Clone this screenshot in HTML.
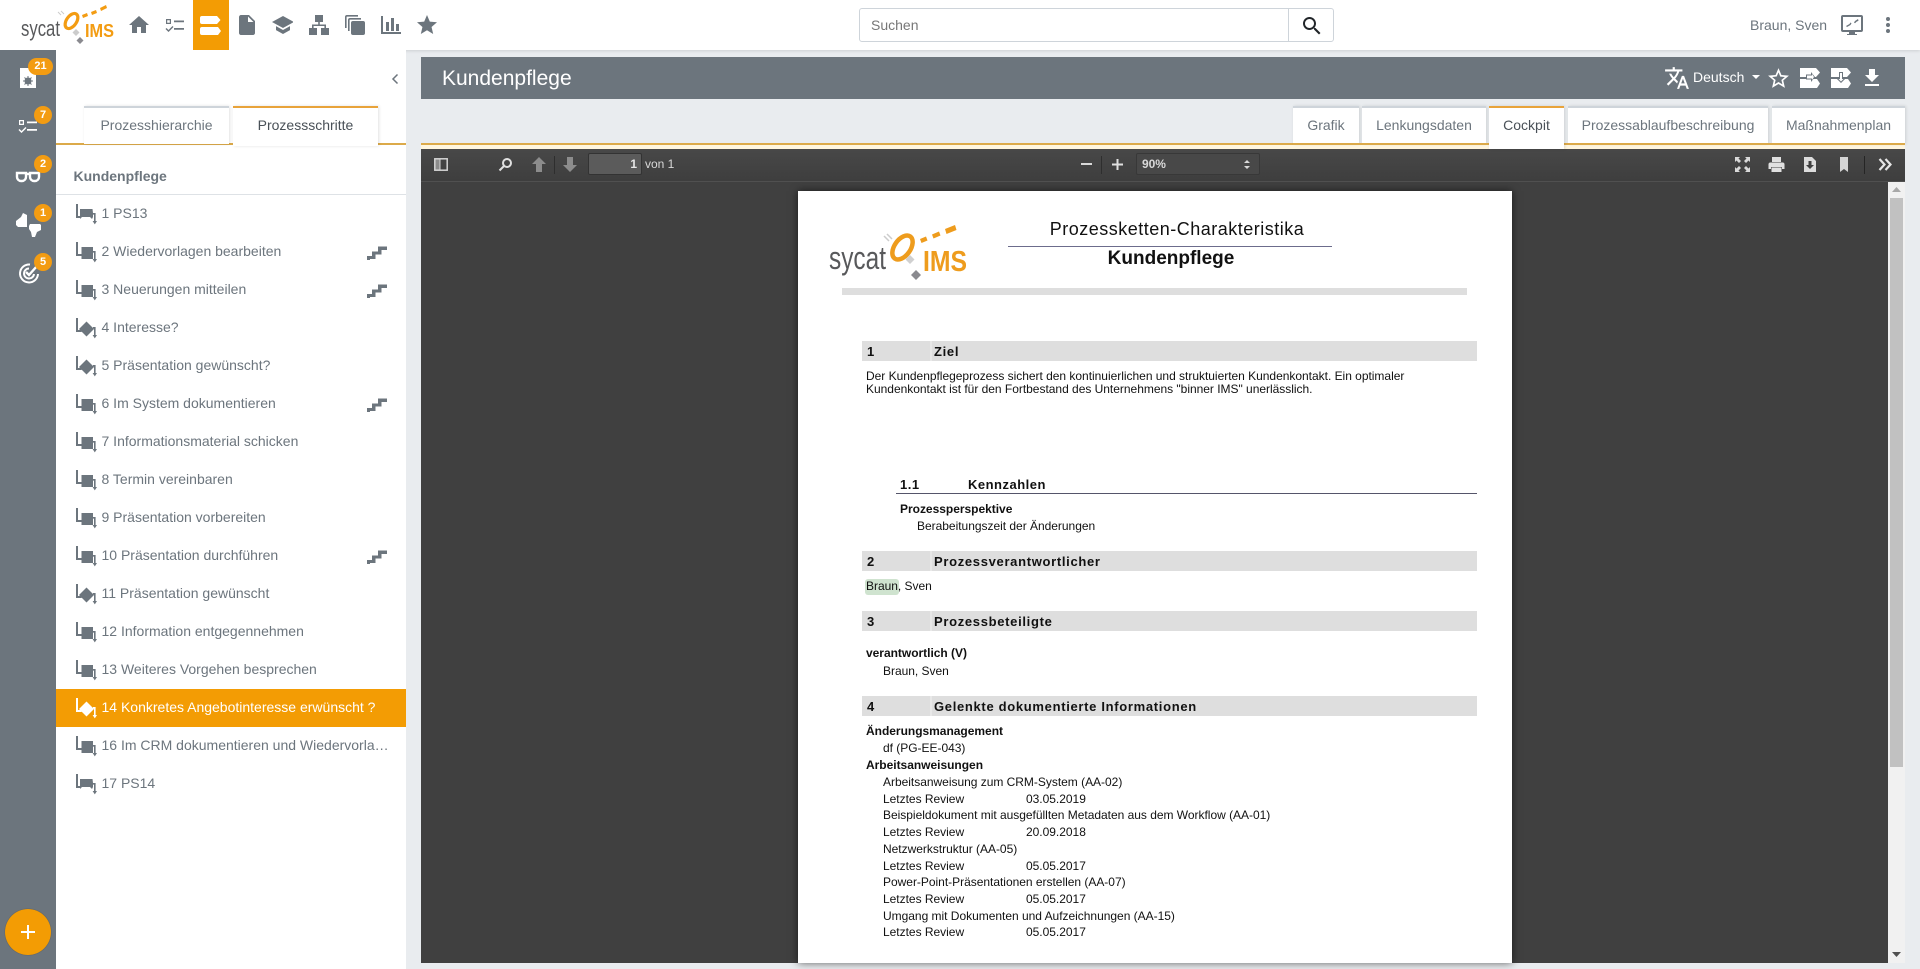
<!DOCTYPE html>
<html lang="de">
<head>
<meta charset="utf-8">
<title>Kundenpflege</title>
<style>
html,body{margin:0;padding:0;width:1920px;height:969px;overflow:hidden;background:#e9ecef;font-family:"Liberation Sans",Arial,sans-serif;color:#6c757d}
*{box-sizing:border-box}
.a{position:absolute}
svg{position:absolute;overflow:visible}
#hdr{left:0;top:0;width:1920px;height:50px;background:#fff;box-shadow:0 1px 3px rgba(0,0,0,.12)}
#rail{left:0;top:50px;width:56px;height:919px;background:#6c757d}
#panel{left:56px;top:50px;width:350px;height:919px;background:#fff}
.bd{position:absolute;background:#f39c12;color:#fff;font-weight:bold;font-size:11px;line-height:17px;height:17px;min-width:18px;border-radius:9px;text-align:center}
.tab{position:absolute;top:106px;height:38px;background:#fff;border-top:2px solid #ced4da;font-size:14px;line-height:35px;text-align:center;color:#6c757d;box-shadow:1px 0 3px rgba(0,0,0,.12)}
.tab.on{border-top:2px solid #e8a33a;height:40px;color:#495057;z-index:3}
.line{position:absolute;height:2px;background:#dcaa4a}
.row{position:absolute;left:56px;width:350px;height:38px;font-size:14px;line-height:38px;color:#6c757d}
.row span{position:absolute;left:45.500px;white-space:nowrap}
.row svg{left:17px;top:9px}
.row.on{background:#f39c04;color:#fff}
.row svg.st{left:311px;top:13px}
.t{position:absolute;white-space:nowrap;line-height:16px;font-size:12px;color:#111;letter-spacing:-.02px}
.b{font-weight:bold}
.h{position:absolute;left:862px;width:615px;height:20px;background:#dedede;font-weight:bold;font-size:13px;letter-spacing:.68px;line-height:21px;color:#111;white-space:nowrap}
.h i{position:absolute;left:68px;top:0;width:2px;height:20px;background:#e8e8e8}
.h span{position:absolute;left:5px}
.h b{position:absolute;left:72px}
.tb{color:#d9d9d9}
</style>
</head>
<body>
<svg width="0" height="0" style="position:absolute">
<defs>
<symbol id="task" viewBox="0 0 24 24"><path d="M3 1h2v12h4v2H3z"/><rect x="8.500" y="6" width="11.500" height="12"/><path d="M20 10h2.600v8h1.400l-2.200 3.400-2.200-3.400h1.400v-6.400H20z"/></symbol>
<symbol id="ps" viewBox="0 0 24 24"><path d="M3 1h2v12h2v2H3z"/><path d="M7 6h12.500l.5 4v4l-1 2-2-2H9l-2 2z"/><path d="M20 10h2.600v8h1.400l-2.200 3.400-2.200-3.400h1.400v-6.400H20z"/></symbol>
<symbol id="gate" viewBox="0 0 24 24"><path d="M3 1h2v12h3.500v2H3z"/><path d="M13.500 4.500l7.500 7.500-7.500 7.500L6 12z"/><path d="M20 10h2.600v8h1.400l-2.200 3.400-2.200-3.400h1.400v-6.400H20z"/></symbol>
<symbol id="stair" viewBox="0 0 20 15"><path d="M0 15v-4h5V6.500h6V1.500h9v3.500h-5.500v4.500H8.500V14H3v1z"/></symbol>
</defs>
</svg>

<!-- Header -->
<div class="a" id="hdr"></div>
<svg style="left:0;top:0" width="125" height="50" viewBox="0 0 125 50">
<text x="21" y="36" font-family="Liberation Sans" font-size="22" fill="#58595b" textLength="39" lengthAdjust="spacingAndGlyphs">sycat</text>
<ellipse cx="71.500" cy="21" rx="5" ry="8.500" transform="rotate(35 71.500 21)" fill="none" stroke="#f39c12" stroke-width="3.200"/>
<path d="M82 15l5-2 1 3-5 2zM91 12l5-2 1 3-5 2zM100 8l6-3 1 3-6 3z" fill="#f39c12"/>
<path d="M58 12l3 3M61 11l3 3" stroke="#ccc" stroke-width="1"/>
<path d="M76 29l3.500 3.500L76 36l-3.500-3.500z" fill="#ccc"/>
<path d="M80 37l3.500 3.500L80 44l-3.500-3.500z" fill="#8a8a8f"/>
<text x="85" y="37" font-family="Liberation Sans" font-weight="bold" font-size="18" fill="#f39c12" textLength="29" lengthAdjust="spacingAndGlyphs">IMS</text>
</svg>
<svg style="left:127px;top:13px" width="24" height="24" viewBox="0 0 24 24" fill="#6c757d"><path d="M10 20v-6h4v6h5v-8h3L12 3 2 12h3v8z"/></svg>
<svg style="left:164px;top:18px" width="22" height="16" viewBox="0 0 22 16" fill="#6c757d"><path d="M2 1h5v5H2zm1.200 1.200v2.600h2.600V2.200zM10 2.500h10v1.800H10zM10 10h10v1.800H10z"/><path d="M1.500 11l1-1 2 2 4-4 1 1-5 5z"/></svg>
<div class="a" style="left:193px;top:0;width:36px;height:50px;background:#f39c04"></div>
<svg style="left:199px;top:15px" width="23" height="21" viewBox="0 0 23 21" fill="#fff"><path d="M3 1h15l3.500 4-3.500 4H3a2 2 0 0 1-2-2V3a2 2 0 0 1 2-2zM3 12h16l3 4-3 4H3a2 2 0 0 1-2-2v-4a2 2 0 0 1 2-2z"/></svg>
<svg style="left:235px;top:13px" width="24" height="24" viewBox="0 0 24 24" fill="#6c757d"><path d="M6 2c-1.100 0-1.990.9-1.990 2L4 20c0 1.100.89 2 1.990 2H18c1.100 0 2-.9 2-2V8l-6-6H6zm7 7V3.500L18.500 9H13z"/></svg>
<svg style="left:271px;top:13px" width="24" height="24" viewBox="0 0 24 24" fill="#6c757d"><path d="M5 13.180v4L12 21l7-3.820v-4L12 17l-7-3.820zM12 3L1 9l11 6 10-5.500v-1z"/></svg>
<svg style="left:308px;top:14px" width="22" height="22" viewBox="0 0 22 22" fill="#6c757d"><path d="M7 1h8v7H7zM1 14h8v7H1zM13 14h8v7h-8z"/><path d="M10.200 8h1.600v2.500H18V14h-1.600v-2H5.600v2H4v-3.500h6.200z"/></svg>
<svg style="left:344px;top:14px" width="22" height="22" viewBox="0 0 22 22" fill="#6c757d"><rect x="7" y="7" width="14" height="14" rx="2"/><path d="M1 3a2 2 0 0 1 2-2h11v1.600H3a.4.4 0 0 0-.4.4v11H1z"/><path d="M4 6a2 2 0 0 1 2-2h11v1.600H6a.4.4 0 0 0-.4.4v11H4z"/></svg>
<svg style="left:380px;top:15px" width="22" height="20" viewBox="0 0 22 20" fill="#6c757d"><path d="M1 1h2v16h18v2H1zM6 7h3v9H6zM11 3h3v13h-3zM16 9h3v7h-3z"/></svg>
<svg style="left:415px;top:13px" width="24" height="24" viewBox="0 0 24 24" fill="#6c757d"><path d="M12 17.270L18.180 21l-1.640-7.030L22 9.240l-7.190-.61L12 2 9.190 8.630 2 9.240l5.460 4.730L5.820 21z"/></svg>

<div class="a" style="left:859px;top:8px;width:475px;height:34px;border:1px solid #ced4da;border-radius:3px;background:#fff"></div>
<div class="a" style="left:1288px;top:8px;width:1px;height:34px;background:#ced4da"></div>
<div class="t" style="left:871px;top:17px;font-size:14px;color:#777;letter-spacing:0">Suchen</div>
<svg style="left:1300px;top:14px" width="24" height="24" viewBox="0 0 24 24" fill="#212529"><path d="M15.500 14h-.79l-.28-.27C15.410 12.590 16 11.110 16 9.500 16 5.910 13.090 3 9.500 3S3 5.910 3 9.500 5.910 16 9.500 16c1.610 0 3.090-.59 4.230-1.570l.27.28v.79l5 4.990L20.490 19l-4.990-5zm-6 0C7.010 14 5 11.990 5 9.500S7.010 5 9.500 5 14 7.010 14 9.500 11.990 14 9.500 14z"/></svg>
<div class="t" style="left:1750px;top:17px;font-size:14px;color:#6c757d;letter-spacing:0">Braun, Sven</div>
<svg style="left:1840px;top:14px" width="24" height="22" viewBox="0 0 24 22" fill="#6c757d"><path d="M3 1h18a2 2 0 0 1 2 2v13a2 2 0 0 1-2 2h-6v2h2v1H7v-1h2v-2H3a2 2 0 0 1-2-2V3a2 2 0 0 1 2-2zm0 2v13h18V3z"/><path d="M6 12l3.500-2 1-1.500 1 .8-1 1.700L7 13zM18 5l-3 2-1 1.500 1 .8 1.500-1.500 2-1z"/></svg>
<svg style="left:1882px;top:16px" width="12" height="18" viewBox="0 0 12 18" fill="#6c757d"><circle cx="6" cy="3" r="2"/><circle cx="6" cy="9" r="2"/><circle cx="6" cy="15" r="2"/></svg>

<!-- Rail -->
<div class="a" id="rail"></div>
<svg style="left:19px;top:67px" width="18" height="22" viewBox="0 0 18 22" fill="#fff"><path d="M1 1h10l6 6v14H1z"/><circle cx="9" cy="14" r="3.500" fill="#6c757d"/><path d="M9 9v10M4 14h10M5.500 10.500l7 7M12.500 10.500l-7 7" stroke="#6c757d" stroke-width="1"/></svg>
<div class="bd" style="left:28px;top:58px;width:25px">21</div>
<svg style="left:17px;top:119px" width="22" height="16" viewBox="0 0 22 16" fill="#fff"><path d="M2 1h5v5H2zm1.200 1.200v2.600h2.600V2.200zM10 2.500h10v1.800H10zM10 10h10v1.800H10z"/><path d="M1.500 11l1-1 2 2 4-4 1 1-5 5z"/></svg>
<div class="bd" style="left:34px;top:106px;height:18px;line-height:18px">7</div>
<svg style="left:15px;top:171px" width="26" height="12" viewBox="0 0 26 12" fill="none" stroke="#fff" stroke-width="2.400"><path d="M2 2h9v4a4 4 0 0 1-4 4H6a4 4 0 0 1-4-4zM15 2h9v4a4 4 0 0 1-4 4h-1a4 4 0 0 1-4-4z"/><path d="M11 3h4"/></svg>
<div class="bd" style="left:34px;top:155px;height:18px;line-height:18px">2</div>
<svg style="left:15px;top:212px" width="27" height="26" viewBox="0 0 27 26" fill="#fff"><path d="M1 9l5-4 2-4 4 2v12H3l-2-2zM15 12h10l1 1v5l-4 2-2 5h-3l-1-5-2-3v-3z"/></svg>
<div class="bd" style="left:34px;top:204px;height:18px;line-height:18px">1</div>
<svg style="left:17px;top:262px" width="24" height="22" viewBox="0 0 24 22" fill="none" stroke="#fff" stroke-width="2"><path d="M13 2.500A9 9 0 1 0 21 12"/><path d="M12 6.500A5 5 0 1 0 17 12"/><path d="M9 10l3 3 8-9" stroke-width="2.400"/></svg>
<div class="bd" style="left:34px;top:253px;height:18px;line-height:18px">5</div>
<div class="a" style="left:5px;top:909px;width:46px;height:46px;border-radius:50%;background:#f39c04;box-shadow:0 0 1px rgba(0,0,0,.4)"></div>
<svg style="left:21px;top:925px" width="14" height="14" viewBox="0 0 14 14" fill="#fff"><path d="M6 0h2v6h6v2H8v6H6V8H0V6h6z"/></svg>

<!-- Panel -->
<div class="a" id="panel"></div>
<svg style="left:391px;top:73px" width="8" height="12" viewBox="0 0 8 12" fill="none" stroke="#6c757d" stroke-width="1.500"><path d="M6.500 1.500L2 6l4.500 4.500"/></svg>
<div class="line" style="left:56px;top:143px;width:350px"></div>
<div class="tab" style="left:84px;width:145px">Prozesshierarchie</div>
<div class="tab on" style="left:233px;width:145px">Prozessschritte</div>
<div class="t b" style="left:73.500px;top:168px;font-size:14px;color:#6c757d;letter-spacing:0">Kundenpflege</div>
<div class="a" style="left:56px;top:194px;width:350px;height:1px;background:#dee2e6"></div>

<div class="row" style="top:194px"><svg width="24" height="24" fill="#6c757d"><use href="#ps"/></svg><span>1 PS13</span></div>
<div class="row" style="top:232px"><svg width="24" height="24" fill="#6c757d"><use href="#task"/></svg><span>2 Wiedervorlagen bearbeiten</span><svg class="st" width="20" height="15" fill="#6c757d"><use href="#stair"/></svg></div>
<div class="row" style="top:270px"><svg width="24" height="24" fill="#6c757d"><use href="#task"/></svg><span>3 Neuerungen mitteilen</span><svg class="st" width="20" height="15" fill="#6c757d"><use href="#stair"/></svg></div>
<div class="row" style="top:308px"><svg width="24" height="24" fill="#6c757d"><use href="#gate"/></svg><span>4 Interesse?</span></div>
<div class="row" style="top:346px"><svg width="24" height="24" fill="#6c757d"><use href="#gate"/></svg><span>5 Präsentation gewünscht?</span></div>
<div class="row" style="top:384px"><svg width="24" height="24" fill="#6c757d"><use href="#task"/></svg><span>6 Im System dokumentieren</span><svg class="st" width="20" height="15" fill="#6c757d"><use href="#stair"/></svg></div>
<div class="row" style="top:422px"><svg width="24" height="24" fill="#6c757d"><use href="#task"/></svg><span>7 Informationsmaterial schicken</span></div>
<div class="row" style="top:460px"><svg width="24" height="24" fill="#6c757d"><use href="#task"/></svg><span>8 Termin vereinbaren</span></div>
<div class="row" style="top:498px"><svg width="24" height="24" fill="#6c757d"><use href="#task"/></svg><span>9 Präsentation vorbereiten</span></div>
<div class="row" style="top:536px"><svg width="24" height="24" fill="#6c757d"><use href="#task"/></svg><span>10 Präsentation durchführen</span><svg class="st" width="20" height="15" fill="#6c757d"><use href="#stair"/></svg></div>
<div class="row" style="top:574px"><svg width="24" height="24" fill="#6c757d"><use href="#gate"/></svg><span>11 Präsentation gewünscht</span></div>
<div class="row" style="top:612px"><svg width="24" height="24" fill="#6c757d"><use href="#task"/></svg><span>12 Information entgegennehmen</span></div>
<div class="row" style="top:650px"><svg width="24" height="24" fill="#6c757d"><use href="#task"/></svg><span>13 Weiteres Vorgehen besprechen</span></div>
<div class="row on" style="top:689px"><svg width="24" height="24" fill="#fff" style="top:8px"><use href="#gate"/></svg><span style="top:-1px">14 Konkretes Angebotinteresse erwünscht ?</span></div>
<div class="row" style="top:726px"><svg width="24" height="24" fill="#6c757d"><use href="#task"/></svg><span style="width:288px;overflow:hidden;text-overflow:ellipsis">16 Im CRM dokumentieren und Wiedervorlage</span></div>
<div class="row" style="top:764px"><svg width="24" height="24" fill="#6c757d"><use href="#ps"/></svg><span>17 PS14</span></div>

<!-- Title bar -->
<div class="a" style="left:421px;top:57px;width:1484px;height:42px;background:#6c757d"></div>
<div class="t" style="left:442px;top:67px;font-size:21px;line-height:24px;color:#fff;letter-spacing:0">Kundenpflege</div>
<svg style="left:1664px;top:65px" width="26" height="26" viewBox="0 0 24 24" fill="#fff"><path d="M12.870 15.070l-2.540-2.510.03-.03c1.740-1.940 2.980-4.170 3.710-6.530H17V4h-7V2H8v2H1v1.990h11.170C11.500 7.920 10.440 9.750 9 11.350 8.070 10.320 7.300 9.190 6.690 8h-2c.73 1.630 1.730 3.170 2.980 4.560l-5.090 5.020L4 19l5-5 3.110 3.110.76-2.040zM18.500 10h-2L12 22h2l1.120-3h4.750L21 22h2l-4.500-12zm-2.620 7l1.620-4.330L19.120 17h-3.240z"/></svg>
<div class="t" style="left:1693px;top:69px;font-size:14px;color:#fff;letter-spacing:0">Deutsch</div>
<svg style="left:1752px;top:75px" width="8" height="4" viewBox="0 0 8 4" fill="#fff"><path d="M0 0h8L4 4z"/></svg>
<svg style="left:1766px;top:66px" width="25" height="25" viewBox="0 0 24 24" fill="#fff"><path d="M22 9.240l-7.190-.62L12 2 9.190 8.630 2 9.240l5.460 4.730L5.820 21 12 17.270 18.180 21l-1.630-7.030L22 9.240zM12 15.400l-3.760 2.270 1-4.280-3.320-2.880 4.380-.38L12 6.100l1.710 4.040 4.380.38-3.320 2.880 1 4.280L12 15.400z"/></svg>
<svg style="left:1800px;top:68px" width="21" height="20" viewBox="0 0 21 20" fill="#fff"><path d="M0 0h16l4 4.500-4 4.500H0zM0 11h17l3 4.500-3 4.500H0z"/><path d="M6 6.500h5V4l4 5-4 5v-2.500H6z" fill="#6c757d"/><path d="M7 7.500h5V6l2 3-2 3v-1.500H7z" fill="#fff"/></svg>
<svg style="left:1831px;top:68px" width="21" height="20" viewBox="0 0 21 20" fill="#fff"><path d="M0 0h16l4 4.500-4 4.500H0zM0 11h17l3 4.500-3 4.500H0z"/><path d="M8 4h4v6h3l-5 5-5-5h3z" fill="#6c757d"/><path d="M9 5h2v6h1.500L10 13.500 7.500 11H9z" fill="#fff"/></svg>
<svg style="left:1860px;top:66px" width="24" height="24" viewBox="0 0 24 24" fill="#fff"><path d="M19 9h-4V3H9v6H5l7 7 7-7zM5 18v2h14v-2H5z"/></svg>

<!-- Right tabs -->
<div class="a" style="left:421px;top:143px;width:1484px;height:6px;background:#fff6df"></div>
<div class="line" style="left:421px;top:143px;width:1484px"></div>
<div class="tab" style="left:1293px;width:66px">Grafik</div>
<div class="tab" style="left:1362px;width:124px">Lenkungsdaten</div>
<div class="tab on" style="left:1489px;width:75px;height:43px">Cockpit</div>
<div class="tab" style="left:1568px;width:200px">Prozessablaufbeschreibung</div>
<div class="tab" style="left:1772px;width:133px">Maßnahmenplan</div>
<div class="line" style="left:1293px;top:143px;width:196px"></div>
<div class="line" style="left:1564px;top:143px;width:341px"></div>

<!-- PDF viewer -->
<div class="a" style="left:421px;top:149px;width:1467px;height:814px;background:#404040"></div>
<div class="a" style="left:421px;top:149px;width:1484px;height:33px;background:linear-gradient(#484848,#3e3e3e);border-bottom:1px solid #505050;z-index:2"></div>
<div class="a" style="z-index:4;left:0;top:0">
<svg style="left:434px;top:158px" width="14" height="13" viewBox="0 0 14 13" fill="none" stroke="#d4d4d4" stroke-width="1.500"><rect x=".8" y=".8" width="12.400" height="11.400"/><path d="M6 1v11" stroke-width="1"/><rect x="1.500" y="1.500" width="4" height="10" fill="#d4d4d4" stroke="none" opacity=".5"/></svg>
<svg style="left:498px;top:157px" width="15" height="15" viewBox="0 0 15 15" fill="none" stroke="#e0e0e0" stroke-width="2"><circle cx="9" cy="6" r="4"/><path d="M6 9l-4.500 4.500"/></svg>
<svg style="left:531px;top:157px" width="16" height="15" viewBox="0 0 16 15" fill="#8c8c8c"><path d="M8 0l7 7h-4v8H5V7H1z"/></svg>
<div class="a" style="left:554px;top:156px;width:1px;height:18px;background:#2e2e2e"></div>
<svg style="left:562px;top:157px" width="16" height="15" viewBox="0 0 16 15" fill="#8c8c8c"><path d="M8 15L1 8h4V0h6v8h4z"/></svg>
<div class="a" style="left:588px;top:153px;width:54px;height:22px;background:#5b5b5b;border:1px solid #333;border-radius:2px"></div>
<div class="t b" style="left:588px;top:156px;width:49px;text-align:right;font-size:12px;color:#e6e6e6;font-weight:bold">1</div>
<div class="t tb" style="left:645px;top:156px;font-size:12px">von 1</div>

<svg style="left:1081px;top:163px" width="11" height="2" fill="#d9d9d9"><rect width="11" height="2"/></svg>
<div class="a" style="left:1101px;top:156px;width:1px;height:18px;background:#2e2e2e"></div>
<svg style="left:1112px;top:159px" width="11" height="11" fill="#e0e0e0"><path d="M4.500 0h2v4.500H11v2H6.500V11h-2V6.500H0v-2h4.500z"/></svg>
<div class="a" style="left:1136px;top:153px;width:124px;height:22px;background:#484848;border:1px solid #383838;border-radius:2px"></div>
<div class="t tb b" style="left:1142px;top:156px;font-size:12px">90%</div>
<svg style="left:1244px;top:160px" width="6" height="9" fill="#d9d9d9"><path d="M3 0l3 3H0zM3 9L0 6h6z"/></svg>

<svg style="left:1735px;top:157px" width="15" height="15" viewBox="0 0 15 15" fill="#d9d9d9"><path d="M0 0h5l-1.500 1.500L6 4 4 6 1.500 3.500 0 5zM15 0v5l-1.500-1.500L11 6 9 4l2.500-2.500L10 0zM0 15v-5l1.500 1.500L4 9l2 2-2.500 2.500L5 15zM15 15h-5l1.500-1.500L9 11l2-2 2.500 2.500L15 10z"/></svg>
<svg style="left:1768px;top:157px" width="17" height="15" viewBox="0 0 17 15" fill="#e0e0e0"><path d="M4 0h9v5H4zM2 5.500h13a2 2 0 0 1 1.500 2V12H14v-2H3v2H.5V7.500a2 2 0 0 1 1.500-2zM3.500 10.500h10V15h-10z"/></svg>
<svg style="left:1804px;top:157px" width="12" height="15" viewBox="0 0 12 15" fill="#dcdcdc"><path d="M0 0h8l4 4v11H0z"/><path d="M4.500 4h3v4H10l-4 4-4-4h2.500z" fill="#3f3f3f"/></svg>
<svg style="left:1840px;top:157px" width="8" height="15" viewBox="0 0 8 15" fill="#d4d4d4"><path d="M0 0h8v15l-4-3-4 3z"/></svg>
<div class="a" style="left:1864px;top:156px;width:1px;height:18px;background:#252525"></div>
<svg style="left:1878px;top:158px" width="14" height="13" viewBox="0 0 14 13" fill="none" stroke="#e6e6e6" stroke-width="2.200"><path d="M1.500 1l5 5.500-5 5.500M7.500 1l5 5.500-5 5.500"/></svg>
</div>

<!-- Scrollbar -->
<div class="a" style="left:1888px;top:182px;width:17px;height:781px;background:#f1f1f1"></div>
<svg style="left:1892px;top:187px" width="9" height="5" fill="#a8a8a8"><path d="M4.500 0L9 5H0z"/></svg>
<div class="a" style="left:1890px;top:198px;width:13px;height:569px;background:#c1c1c1"></div>
<svg style="left:1892px;top:952px" width="9" height="5" fill="#505050"><path d="M0 0h9L4.500 5z"/></svg>

<!-- PDF page -->
<div class="a" style="left:798px;top:191px;width:714px;height:772px;background:#fff;box-shadow:0 0 8px rgba(0,0,0,.6)"></div>
<svg style="left:825px;top:218px" width="150" height="66" viewBox="0 0 150 66">
<text x="4" y="51" font-family="Liberation Sans" font-size="32" fill="#58595b" textLength="57" lengthAdjust="spacingAndGlyphs">sycat</text>
<ellipse cx="77.500" cy="29.500" rx="8" ry="13.500" transform="rotate(35 77.500 29.500)" fill="none" stroke="#ee9c1d" stroke-width="4.500"/>
<path d="M95 21l6-2.500 1.500 4-6 2.500zM107 16.500l7-3 1.500 4-7 3zM120 11l10-4 1.500 5-10 4z" fill="#ee9c1d"/>
<path d="M59 18l5 5M62 16l5 5" stroke="#ccc" stroke-width="1.500"/>
<path d="M85 37l4.500 4.500L85 46l-4.500-4.500z" fill="#d0d0d0"/>
<path d="M91 52l5 5-5 5-5-5z" fill="#8a8a8f"/>
<text x="98" y="53" font-family="Liberation Sans" font-weight="bold" font-size="29" fill="#ee9c1d" textLength="44" lengthAdjust="spacingAndGlyphs">IMS</text>
</svg>
<div class="t" style="left:1015px;top:219px;width:324px;text-align:center;font-size:18px;line-height:20px;color:#111;letter-spacing:.5px">Prozessketten-Charakteristika</div>
<div class="a" style="left:1008px;top:246px;width:324px;height:1px;background:#6c6c8c"></div>
<div class="t b" style="left:1009px;top:249px;width:324px;text-align:center;font-size:19px;line-height:20px;color:#111;letter-spacing:0">Kundenpflege</div>
<div class="a" style="left:842px;top:288px;width:625px;height:7px;background:#dedede"></div>

<div class="h" style="top:341px"><span>1</span><i></i><b>Ziel</b></div>
<div class="t" style="left:866px;top:370px;line-height:13px">Der Kundenpflegeprozess sichert den kontinuierlichen und struktuierten Kundenkontakt. Ein optimaler<br>Kundenkontakt ist für den Fortbestand des Unternehmens "binner IMS" unerlässlich.</div>

<div class="t b" style="left:900px;top:477px;font-size:13px;letter-spacing:.5px">1.1</div>
<div class="t b" style="left:968px;top:477px;font-size:13px;letter-spacing:.5px">Kennzahlen</div>
<div class="a" style="left:896px;top:492.500px;width:581px;height:1px;background:#55556a"></div>
<div class="t b" style="left:900px;top:501px">Prozessperspektive</div>
<div class="t" style="left:917px;top:518px">Berabeitungszeit der Änderungen</div>

<div class="h" style="top:551px"><span>2</span><i></i><b>Prozessverantwortlicher</b></div>
<div class="a" style="left:865px;top:579px;width:34px;height:16px;background:#cfe3cf;border-radius:3px"></div>
<div class="t" style="left:866px;top:578px">Braun, Sven</div>

<div class="h" style="top:611px"><span>3</span><i></i><b>Prozessbeteiligte</b></div>
<div class="t b" style="left:866px;top:645px">verantwortlich (V)</div>
<div class="t" style="left:883px;top:663px">Braun, Sven</div>

<div class="h" style="top:696px"><span>4</span><i></i><b>Gelenkte dokumentierte Informationen</b></div>
<div class="t b" style="left:866px;top:723px">Änderungsmanagement</div>
<div class="t" style="left:883px;top:740px">df (PG-EE-043)</div>
<div class="t b" style="left:866px;top:757px">Arbeitsanweisungen</div>
<div class="t" style="left:883px;top:774px">Arbeitsanweisung zum CRM-System (AA-02)</div>
<div class="t" style="left:883px;top:791px">Letztes Review</div><div class="t" style="left:1026px;top:791px">03.05.2019</div>
<div class="t" style="left:883px;top:807px">Beispieldokument mit ausgefüllten Metadaten aus dem Workflow (AA-01)</div>
<div class="t" style="left:883px;top:824px">Letztes Review</div><div class="t" style="left:1026px;top:824px">20.09.2018</div>
<div class="t" style="left:883px;top:841px">Netzwerkstruktur (AA-05)</div>
<div class="t" style="left:883px;top:858px">Letztes Review</div><div class="t" style="left:1026px;top:858px">05.05.2017</div>
<div class="t" style="left:883px;top:874px">Power-Point-Präsentationen erstellen (AA-07)</div>
<div class="t" style="left:883px;top:891px">Letztes Review</div><div class="t" style="left:1026px;top:891px">05.05.2017</div>
<div class="t" style="left:883px;top:908px">Umgang mit Dokumenten und Aufzeichnungen (AA-15)</div>
<div class="t" style="left:883px;top:924px">Letztes Review</div><div class="t" style="left:1026px;top:924px">05.05.2017</div>
</body>
</html>
